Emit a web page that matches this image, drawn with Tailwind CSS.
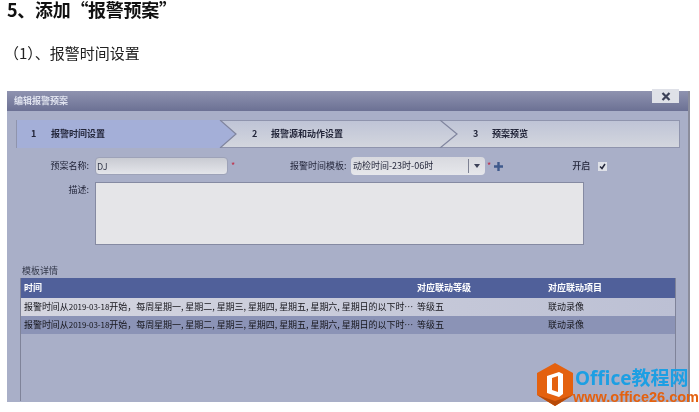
<!DOCTYPE html>
<html lang="zh-CN">
<head>
    <meta charset="UTF-8">
    <meta name="viewport" content="width=device-width, initial-scale=1.0">
    <title>添加报警预案</title>
    <script src="https://cdn.jsdelivr.net/npm/@tailwindcss/browser@4"></script>
</head>
<body class="bg-white w-[699px] h-[412px] overflow-hidden relative font-['Noto_Sans_CJK_SC',sans-serif] text-[#1a1a22]">
    <h1 class="pl-[7px] h-[18px] leading-[18px] text-[18px] font-bold text-[#111] tracking-[-0.3px] blur-[0.3px]">5、添加“报警预案”</h1>
    <p class="mt-[25px] pl-[4px] h-[20px] leading-[20px] text-[15px] text-[#222] blur-[0.3px]">（1）、报警时间设置</p>

    <!-- dialog -->
    <div class="relative mt-[28px] ml-[7px] w-[683px] h-[311px] bg-[#a9afc8] border-r-2 border-[#8b8d9c] text-[9px] blur-[0.4px]">
        <div class="h-[20px] pl-[7px] flex items-center bg-gradient-to-b from-[#8f93b0] to-[#6c7194] text-[#dfe2ee] font-bold">编辑报警预案</div>
        <button class="absolute right-[9px] -top-[2px] w-[27px] h-[14px] bg-[#dfe1e8] flex items-center justify-center">
            <svg width="10" height="9" viewBox="0 0 10 9"><path d="M1.5 1 8.5 8M8.5 1 1.5 8" stroke="#3c4158" stroke-width="2.2"/></svg>
        </button>

        <!-- steps -->
        <div class="relative mt-[9px] ml-[9px] w-[664px] h-[28px] flex items-center border border-[#8f94ad] bg-gradient-to-b from-[#bfc4d6] to-[#d3d6de] font-bold text-[#23263a]">
            <svg class="absolute left-0 -top-px" width="664" height="28" viewBox="0 0 664 28">
                <path d="M0 0H203L219 14 203 28H0Z" fill="#a4afd8"/>
                <path d="M203 0 219 14 203 28M423 0 440 14 423 28" fill="none" stroke="#80859e" stroke-width="1.2"/>
            </svg>
            <div class="relative w-[221px] flex pl-[14px]"><span class="w-[20px]">1</span><span>报警时间设置</span></div>
            <div class="relative w-[222px] flex pl-[14px]"><span class="w-[19px]">2</span><span>报警源和动作设置</span></div>
            <div class="relative flex pl-[13px]"><span class="w-[19px]">3</span><span>预案预览</span></div>
        </div>

        <!-- form -->
        <div class="mt-[9px] flex items-center h-[18px]">
            <label class="w-[82px] text-right text-[#23263a]">预案名称:</label>
            <input value="DJ" class="ml-[6px] w-[133px] h-[18px] px-px text-[9px] text-[#33384a] rounded-sm border border-[#9da2b8] bg-gradient-to-b from-[#c9cbd2] to-[#e4e5ea] outline-none">
            <span class="ml-[3px] w-[59px] text-[#c0304a]">*</span>
            <label class="w-[61px] whitespace-nowrap text-[#23263a]">报警时间模板:</label>
            <div class="w-[134px] h-[18px] flex items-center rounded-sm bg-gradient-to-b from-[#d8d9df] to-[#e6e7eb] text-[#23263a]">
                <span class="pl-[2px] w-[118px] border-r border-[#7d8193]">动检时间-23时-06时</span>
                <svg class="ml-[5px]" width="6" height="4" viewBox="0 0 6 4"><path d="M0 0H6L3 4Z" fill="#3c4158"/></svg>
            </div>
            <span class="ml-[2px] text-[#c0304a]">*</span>
            <svg class="ml-[3px]" width="9" height="9" viewBox="0 0 9 9"><path d="M4.5 0V9M0 4.5H9" stroke="#3f5a8c" stroke-width="2.4"/></svg>
            <span class="ml-[69px] text-[#23263a] font-medium">开启</span>
            <span class="ml-[8px] w-[9px] h-[9px] bg-[#dfe1e8] flex items-center justify-center">
                <svg width="7" height="7" viewBox="0 0 7 7"><path d="M1 3.5 3 5.5 6 1" fill="none" stroke="#23263a" stroke-width="1.5"/></svg>
            </span>
        </div>
        <div class="mt-[7px] flex">
            <label class="w-[82px] text-right pt-[1px] text-[#23263a]">描述:</label>
            <textarea class="ml-[6px] w-[489px] h-[63px] bg-[#e5e5e8] border border-[#858aa2] resize-none outline-none"></textarea>
        </div>

        <!-- template details -->
        <div class="mt-[19px] ml-[15px] h-[14px] leading-[14px] text-[#33384a]">模板详情</div>
        <div class="ml-[13px] w-[656px] h-[123px] border-l border-r border-[#7f8399] text-[#16161c]">
            <div class="grid grid-cols-[396px_131px_1fr] h-[20px] items-center bg-[#50609a] text-white font-bold">
                <span class="pl-[3px]">时间</span><span>对应联动等级</span><span>对应联动项目</span>
            </div>
            <div class="grid grid-cols-[396px_131px_1fr] h-[18px] items-center bg-gradient-to-r from-[#d5d6e0] to-[#bcc0d4]">
                <span class="pl-[3px] whitespace-nowrap tracking-[-0.05px]">报警时间从<span class="text-[8px]">2019-03-18</span>开始，每周星期一, 星期二, 星期三, 星期四, 星期五, 星期六, 星期日的以下时…</span><span>等级五</span><span>联动录像</span>
            </div>
            <div class="grid grid-cols-[396px_131px_1fr] h-[18px] items-center bg-[#8b93b6]">
                <span class="pl-[3px] whitespace-nowrap tracking-[-0.05px]">报警时间从<span class="text-[8px]">2019-03-18</span>开始，每周星期一, 星期二, 星期三, 星期四, 星期五, 星期六, 星期日的以下时…</span><span>等级五</span><span>联动录像</span>
            </div>
        </div>
    </div>

    <!-- watermark -->
    <div class="absolute left-[536px] top-[363px] flex blur-[0.3px]">
        <svg width="38" height="43" viewBox="0 0 38 43">
            <path d="M19 0 37 10V32L19 43 1 32V10Z" fill="#e4610f"/>
            <path d="M37 32 19 43 1 32 19 38Z" fill="#b84a08"/>
            <path d="M11 13 23 9 27 11V31L23 34 11 30Z" fill="#fff"/>
            <path d="M16 15 22 13V29L16 27Z" fill="#e4610f"/>
        </svg>
        <div class="ml-[1px] font-bold">
            <div class="h-[26px] mt-[1px] leading-[26px] text-[19px] text-[#1d9fe3] whitespace-nowrap font-['Noto_Sans',sans-serif]">Office<span class="font-['Noto_Sans_CJK_SC',sans-serif]">教程网</span></div>
            <div class="h-[12px] mt-[1px] -ml-[2px] leading-[12px] text-[14.5px] text-[#e4610f] whitespace-nowrap font-['Liberation_Sans',sans-serif]">www.office26.com</div>
        </div>
    </div>
</body>
</html>
